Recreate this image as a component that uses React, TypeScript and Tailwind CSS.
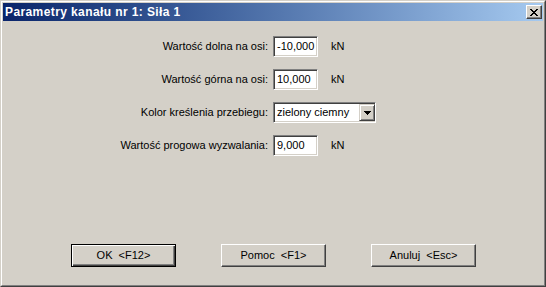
import type { ReactNode } from "react";

const FONT = "font-['Liberation_Sans',Arial,sans-serif]";

const ROWS = [
  { label: "Wartość dolna na osi:", value: "-10,000" },
  { label: "Wartość górna na osi:", value: "10,000" },
] as const;

function Sunken({ children, className }: { children: ReactNode; className?: string }) {
  return (
    <div
      className={`flex h-[21px] items-center border border-t-[#808080] border-l-[#808080] border-r-white border-b-white bg-white shadow-[inset_1px_1px_#404040,inset_-1px_-1px_#d4d0c8] ${className ?? ""}`}
    >
      {children}
    </div>
  );
}

function Field({ label, value }: { label: string; value: string }) {
  return (
    <div className="flex h-[21px] items-center">
      <span className="w-[270px] pr-[5px] text-right">{label}</span>
      <Sunken className="w-[45px] pl-[3px]">{value}</Sunken>
      <span className="ml-[13px]">kN</span>
    </div>
  );
}

function Button({ label, isDefault }: { label: string; isDefault?: boolean }) {
  return (
    <div
      className={
        isDefault
          ? "flex h-[23px] w-[105px] items-center justify-center whitespace-pre border border-black bg-[#d4d0c8] shadow-[inset_1px_1px_white,inset_-1px_-1px_#404040,inset_-2px_-2px_#808080]"
          : "flex h-[23px] w-[105px] items-center justify-center whitespace-pre border border-t-white border-l-white border-r-[#404040] border-b-[#404040] bg-[#d4d0c8] shadow-[inset_-1px_-1px_#808080]"
      }
    >
      {label}
    </div>
  );
}

export default function App() {
  return (
    <div
      className={`${FONT} h-[287px] w-[546px] border border-t-[#d4d0c8] border-l-[#d4d0c8] border-r-[#404040] border-b-[#404040] bg-[#d4d0c8] text-[11px] text-black`}
    >
      <div className="flex h-full flex-col border border-t-white border-l-white border-r-[#808080] border-b-[#808080] p-px">
        {/* Title bar */}
        <div className="flex h-[18px] shrink-0 items-center justify-between bg-linear-to-r from-[#0a246a] to-[#a6caf0]">
          <span className="pl-[2px] text-[12px] font-bold tracking-[0.4px] text-white">Parametry kanału nr 1: Siła 1</span>
          <div className="mr-[1px] flex h-[14px] w-[16px] items-center justify-center border border-t-white border-l-white border-r-[#404040] border-b-[#404040] bg-[#d4d0c8] shadow-[inset_-1px_-1px_#808080]">
            <svg width="8" height="7" viewBox="0 0 8 7" shapeRendering="crispEdges">
              <path d="M0 0h2v1H0zM6 0h2v1H6zM1 1h2v1H1zM5 1h2v1H5zM2 2h4v1H2zM3 3h2v1H3zM2 4h4v1H2zM1 5h2v1H1zM5 5h2v1H5zM0 6h2v1H0zM6 6h2v1H6z" fill="#000" />
            </svg>
          </div>
        </div>

        {/* Fields */}
        <div className="flex flex-col gap-[12px] pt-[15px]">
          {ROWS.map((r) => (
            <Field key={r.label} label={r.label} value={r.value} />
          ))}
          <div className="flex h-[21px] items-center">
            <span className="w-[270px] pr-[5px] text-right">Kolor kreślenia przebiegu:</span>
            <Sunken className="w-[103px] justify-between pl-[3px]">
              <span>zielony ciemny</span>
              <div className="flex h-[17px] w-[16px] items-center justify-center border border-t-[#d4d0c8] border-l-[#d4d0c8] border-r-[#404040] border-b-[#404040] bg-[#d4d0c8] shadow-[inset_1px_1px_white,inset_-1px_-1px_#808080]">
                <svg width="7" height="4" viewBox="0 0 7 4" shapeRendering="crispEdges">
                  <path d="M0 0h7v1H0zM1 1h5v1H1zM2 2h3v1H2zM3 3h1v1H3z" fill="#000" />
                </svg>
              </div>
            </Sunken>
          </div>
          <Field label="Wartość progowa wyzwalania:" value="9,000" />
        </div>

        {/* Buttons */}
        <div className="mt-auto flex gap-[45px] pb-[17px] pl-[68px]">
          <Button label="OK  <F12>" isDefault />
          <Button label="Pomoc  <F1>" />
          <Button label="Anuluj  <Esc>" />
        </div>
      </div>
    </div>
  );
}
